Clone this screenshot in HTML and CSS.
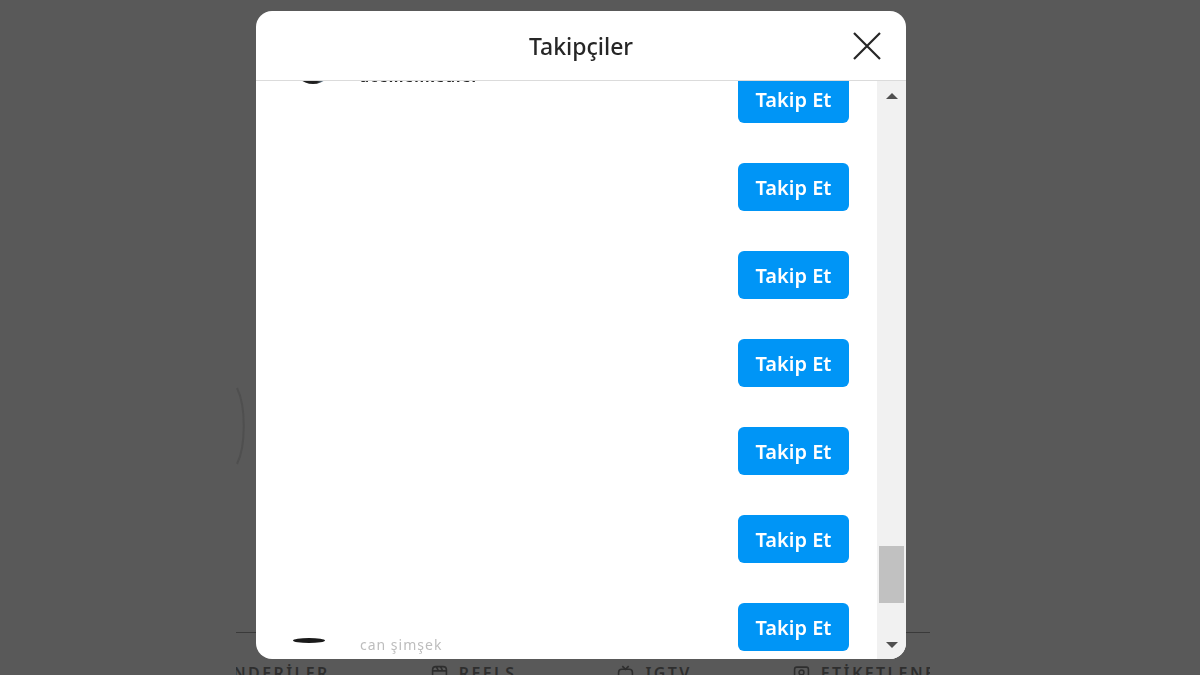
FILE: index.html
```html
<!DOCTYPE html>
<html lang="tr">
<head>
<meta charset="utf-8">
<title>Takipçiler</title>
<link rel="stylesheet" href="styles.css">
</head>
<body>
  <div class="page">
    <div class="page-spacer-top"></div>
    <svg class="story-arc" width="16" height="80" viewBox="0 0 16 80"><path d="M3 2 C 12 20, 12 60, 3 78" fill="none" stroke="#4f4f4f" stroke-width="2"/></svg>
    <div class="page-spacer-bottom"></div>
    <nav class="tabs">
      <span class="tab tab-first">GÖNDERİLER</span>
      <span class="tab"><svg class="tab-icon" width="17" height="17" viewBox="0 0 16 16"><rect x="1.5" y="1.5" width="13" height="13" rx="3" fill="none" stroke="#2e2e2e" stroke-width="1.5"/><path d="M1.5 5.5h13M5 1.5l2 4M9 1.5l2 4" stroke="#2e2e2e" stroke-width="1.5" fill="none"/></svg>REELS</span>
      <span class="tab"><svg class="tab-icon" width="17" height="17" viewBox="0 0 16 16"><rect x="1.5" y="4" width="13" height="11" rx="3" fill="none" stroke="#2e2e2e" stroke-width="1.5"/><path d="M5 1l3 3 3-3" stroke="#2e2e2e" stroke-width="1.5" fill="none"/></svg>IGTV</span>
      <span class="tab"><svg class="tab-icon" width="17" height="17" viewBox="0 0 16 16"><rect x="1.5" y="2" width="13" height="13" rx="2" fill="none" stroke="#2e2e2e" stroke-width="1.5"/><circle cx="8" cy="7" r="2.3" fill="none" stroke="#2e2e2e" stroke-width="1.5"/></svg>ETİKETLENENLER</span>
    </nav>
  </div>

  <div class="modal" role="dialog" aria-label="Takipçiler">
    <header class="modal-header">
      <span></span>
      <h1 class="modal-title">Takipçiler</h1>
      <button class="close-btn" aria-label="Kapat">
        <svg width="30" height="30" viewBox="0 0 30 30"><path d="M2 2 L28 28 M28 2 L2 28" stroke="#262626" stroke-width="2.2" fill="none"/></svg>
      </button>
    </header>
    <div class="modal-body">
      <div class="list">
        <div class="rows">
          <div class="row">
            <div class="user user-top">
              <span class="avatar"></span>
              <span class="username">acemenkeuler</span>
            </div>
            <button class="follow-btn">Takip Et</button>
          </div>
          <div class="row"><button class="follow-btn">Takip Et</button></div>
          <div class="row"><button class="follow-btn">Takip Et</button></div>
          <div class="row"><button class="follow-btn">Takip Et</button></div>
          <div class="row"><button class="follow-btn">Takip Et</button></div>
          <div class="row"><button class="follow-btn">Takip Et</button></div>
          <div class="row">
            <div class="user user-bottom">
              <span class="avatar avatar-thin"></span>
              <span class="fullname">can şimşek</span>
            </div>
            <button class="follow-btn">Takip Et</button>
          </div>
        </div>
      </div>
      <div class="scrollbar">
        <div class="sb-arrow"><span class="tri-up"></span></div>
        <div class="sb-track-space"></div>
        <div class="sb-thumb"></div>
        <div class="sb-track-end"></div>
        <div class="sb-arrow"><span class="tri-down"></span></div>
      </div>
    </div>
  </div>
</body>
</html>
```

FILE: styles.css
```css
* { box-sizing: border-box; }

html, body {
  margin: 0;
  padding: 0;
  height: 100%;
  overflow: hidden;
}

body {
  background: #595959;
  font-family: "Noto Sans", "Open Sans", sans-serif;
  color: #262626;
}

/* background page (dimmed) */
.page {
  width: 760px;
  margin-left: 230px;
  display: flex;
  flex-direction: column;
}

.page-spacer-top { height: 386px; }
.story-arc { display: block; margin-left: 4px; }
.page-spacer-bottom { height: 166px; }

.tabs {
  margin-left: 6px;
  width: 694px;
  border-top: 1px solid #3a3a3a;
  display: flex;
  padding-top: 29px;
  overflow: hidden;
  white-space: nowrap;
}

.tab {
  display: inline-flex;
  align-items: center;
  gap: 11px;
  font-size: 16px;
  letter-spacing: 2.4px;
  color: #2e2e2e;
  font-weight: 600;
  margin-right: 101px;
}

.tab-first { margin-left: -32px; }

.tab-icon { flex: none; }

/* modal overlay */
.modal {
  position: fixed;
  left: 256px;
  top: 11px;
  width: 650px;
  height: 648px;
  background: #fff;
  border-radius: 16px;
  overflow: hidden;
  display: flex;
  flex-direction: column;
}

.modal-header {
  flex: none;
  height: 70px;
  border-bottom: 1px solid #dbdbdb;
  display: grid;
  grid-template-columns: 1fr auto 1fr;
  align-items: center;
}

.modal-title {
  margin: 0;
  font-size: 23px;
  font-weight: 500;
  color: #262626;
  line-height: 1;
  padding-top: 2px;
}

.close-btn {
  justify-self: end;
  margin-right: 24px;
  width: 30px;
  height: 30px;
  padding: 0;
  border: 0;
  background: none;
  display: flex;
}

.modal-body {
  flex: 1;
  display: flex;
  min-height: 0;
}

.list {
  flex: 1;
  overflow: hidden;
}

.rows {
  margin-top: -26px;
}

.row {
  height: 88px;
  display: flex;
  align-items: center;
  padding-left: 37px;
  padding-right: 28px;
}

.user {
  display: flex;
  align-items: flex-end;
  gap: 27px;
}

.user-top {
  align-self: flex-start;
  margin-top: -11px;
}

.user-bottom {
  align-self: flex-start;
  margin-top: 55px;
  align-items: flex-start;
  gap: 35px;
}

.avatar {
  width: 40px;
  height: 40px;
  border-radius: 50%;
  background: linear-gradient(90deg, #1f1f1f 60%, #9ec8e8 85%);
}

.avatar-thin {
  width: 32px;
  height: 5px;
  background: #1a1a1a;
}

.username {
  font-size: 15px;
  font-weight: 700;
  color: #262626;
  line-height: 16px;
  letter-spacing: 1px;
}

.fullname {
  font-size: 14px;
  color: #bdbdbd;
  line-height: 14px;
  letter-spacing: 1px;
}

.follow-btn {
  margin-left: auto;
  width: 111px;
  height: 48px;
  border: 0;
  border-radius: 6px;
  background: #0095f6;
  color: #fff;
  font-family: "Noto Sans", "Open Sans", sans-serif;
  font-size: 20px;
  font-weight: 600;
  padding: 0;
}

/* scrollbar */
.scrollbar {
  flex: none;
  width: 29px;
  background: #f1f1f1;
  display: flex;
  flex-direction: column;
  align-items: center;
}

.sb-arrow {
  flex: none;
  height: 29px;
  width: 100%;
  display: flex;
  align-items: center;
  justify-content: center;
}

.tri-up {
  width: 0;
  height: 0;
  border-left: 6px solid transparent;
  border-right: 6px solid transparent;
  border-bottom: 6px solid #505050;
}

.tri-down {
  width: 0;
  height: 0;
  border-left: 6px solid transparent;
  border-right: 6px solid transparent;
  border-top: 6px solid #505050;
}

.sb-track-space { flex: 1; }

.sb-thumb {
  flex: none;
  width: 25px;
  height: 57px;
  background: #c1c1c1;
}

.sb-track-end {
  flex: none;
  height: 27px;
}
```
